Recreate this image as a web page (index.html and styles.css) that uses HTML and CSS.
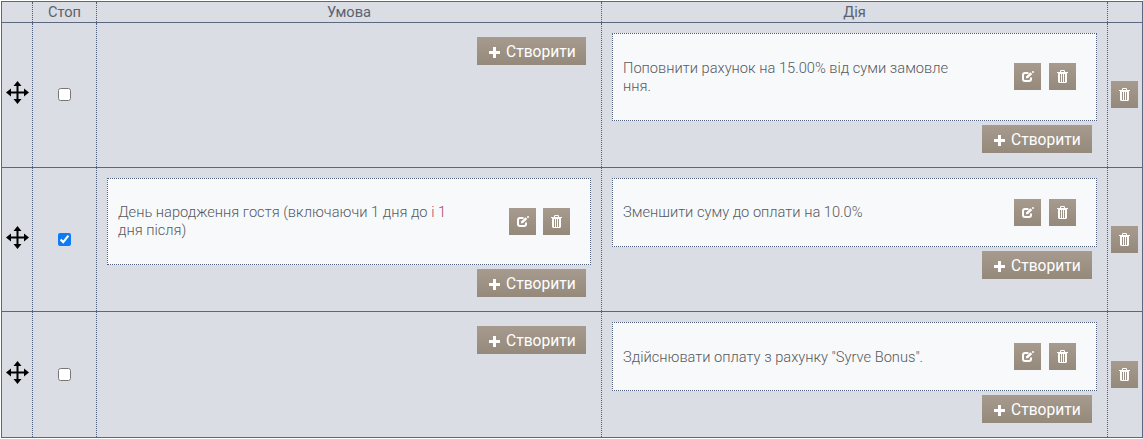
FILE: index.html
```html
<!DOCTYPE html>
<html lang="uk">
<head>
<meta charset="utf-8">
<title>Правила</title>
<link rel="stylesheet" href="styles.css">
</head>
<body>
<svg class="defs" width="0" height="0" aria-hidden="true">
  <symbol id="i-move" viewBox="0 0 23 23">
    <path d="M11.500 0 15.500 5H12.500V10.500H18V7.500L23 11.500 18 15.500V12.500H12.500V18H15.500L11.500 23 7.500 18H10.500V12.500H5V15.500L0 11.500 5 7.500V10.500H10.500V5H7.500Z"/>
  </symbol>
  <symbol id="i-edit" viewBox="0 0 12 11">
    <path d="M9 6.500V8A2 2 0 0 1 7 10H3A2 2 0 0 1 1 8V4A2 2 0 0 1 3 2H6.500" fill="none" stroke="currentColor" stroke-width="2"/>
    <path d="M3.800 7.600 4.300 5.200 8.500 1.300 10.300 3 6.200 7.100Z" fill="currentColor"/>
    <circle cx="11" cy="1" r="1" fill="currentColor"/>
  </symbol>
  <symbol id="i-trash" viewBox="0 0 11 13">
    <path d="M0 2H11V3H0ZM3 2V.8L3.800 0H7.200L8 .8V2H7V1H4V2Z" fill="currentColor"/>
    <path d="M1 3H10V12L9 13H2L1 12ZM3 4V12H4V4ZM5 4V12H6V4ZM7 4V12H8V4Z" fill="currentColor" fill-rule="evenodd"/>
  </symbol>
</svg>

<div class="rules">
  <div class="grid head">
    <div class="cell"></div>
    <div class="cell">Стоп</div>
    <div class="cell">Умова</div>
    <div class="cell">Дія</div>
    <div class="cell"></div>
  </div>

  <div class="grid row row-1">
    <div class="cell cell-move"><svg class="move"><use href="#i-move"/></svg></div>
    <div class="cell cell-stop"><input type="checkbox" aria-label="Стоп"></div>
    <div class="cell stack stack-empty">
      <button class="btn-create" type="button"><span class="plus"></span>Створити</button>
    </div>
    <div class="cell stack stack-action">
      <div class="card card-88">
        <p class="card-text">Поповнити рахунок на 15.00% від суми замовлення.</p>
        <div class="actions">
          <button class="btn-icon" type="button" aria-label="Редагувати"><svg class="ico-edit"><use href="#i-edit"/></svg></button>
          <button class="btn-icon" type="button" aria-label="Видалити"><svg class="ico-trash"><use href="#i-trash"/></svg></button>
        </div>
      </div>
      <button class="btn-create" type="button"><span class="plus"></span>Створити</button>
    </div>
    <div class="cell cell-del"><button class="btn-icon" type="button" aria-label="Видалити"><svg class="ico-trash"><use href="#i-trash"/></svg></button></div>
  </div>

  <div class="grid row row-2">
    <div class="cell cell-move"><svg class="move"><use href="#i-move"/></svg></div>
    <div class="cell cell-stop"><input type="checkbox" checked aria-label="Стоп"></div>
    <div class="cell stack stack-cond">
      <div class="card card-87">
        <p class="card-text">День народження гостя (включаючи 1 дня до <span class="accent">і 1</span> дня після)</p>
        <div class="actions">
          <button class="btn-icon" type="button" aria-label="Редагувати"><svg class="ico-edit"><use href="#i-edit"/></svg></button>
          <button class="btn-icon" type="button" aria-label="Видалити"><svg class="ico-trash"><use href="#i-trash"/></svg></button>
        </div>
      </div>
      <button class="btn-create" type="button"><span class="plus"></span>Створити</button>
    </div>
    <div class="cell stack stack-action">
      <div class="card card-69">
        <p class="card-text">Зменшити суму до оплати на 10.0%</p>
        <div class="actions">
          <button class="btn-icon" type="button" aria-label="Редагувати"><svg class="ico-edit"><use href="#i-edit"/></svg></button>
          <button class="btn-icon" type="button" aria-label="Видалити"><svg class="ico-trash"><use href="#i-trash"/></svg></button>
        </div>
      </div>
      <button class="btn-create" type="button"><span class="plus"></span>Створити</button>
    </div>
    <div class="cell cell-del"><button class="btn-icon" type="button" aria-label="Видалити"><svg class="ico-trash"><use href="#i-trash"/></svg></button></div>
  </div>

  <div class="grid row row-3">
    <div class="cell cell-move"><svg class="move"><use href="#i-move"/></svg></div>
    <div class="cell cell-stop"><input type="checkbox" aria-label="Стоп"></div>
    <div class="cell stack stack-empty">
      <button class="btn-create" type="button"><span class="plus"></span>Створити</button>
    </div>
    <div class="cell stack stack-action">
      <div class="card card-69">
        <p class="card-text">Здійснювати оплату з рахунку "Syrve Bonus".</p>
        <div class="actions">
          <button class="btn-icon" type="button" aria-label="Редагувати"><svg class="ico-edit"><use href="#i-edit"/></svg></button>
          <button class="btn-icon" type="button" aria-label="Видалити"><svg class="ico-trash"><use href="#i-trash"/></svg></button>
        </div>
      </div>
      <button class="btn-create" type="button"><span class="plus"></span>Створити</button>
    </div>
    <div class="cell cell-del"><button class="btn-icon" type="button" aria-label="Видалити"><svg class="ico-trash"><use href="#i-trash"/></svg></button></div>
  </div>
</div>
</body>
</html>
```

FILE: styles.css
```css
* { box-sizing: border-box; }
html, body { margin: 0; padding: 0; background: #fff; }
body { padding: 1px 0 0 1px; overflow: hidden; font-family: Roboto, "Liberation Sans", sans-serif; }
.defs { position: absolute; }

.rules {
  width: 1142px;
  background: #dadde4;
  border: 1px solid #5b6880;
}
.grid {
  display: grid;
  grid-template-columns: 30px 64px 505px 506px 35px;
  border-bottom: 1px solid #5b6880;
}
.grid:last-child { border-bottom: 0; }
.cell { border-left: 1px dotted #4f5f7c; min-width: 0; }
.cell:first-child { border-left: 0; }

.head { height: 21px; }
.head .cell {
  font-size: 14.67px;
  line-height: 20px;
  text-align: center;
  color: #5c626e;
}
.row-1 { height: 145px; }
.row-2 { height: 144px; }
.row-3 { height: 125px; }

.cell-move, .cell-stop, .cell-del {
  display: flex;
  align-items: center;
  justify-content: center;
}
.move { width: 23px; height: 23px; margin-bottom: 5px; margin-left: 1px; }
.cell-stop input { width: 13px; height: 13px; margin: 0; accent-color: #0d7bf5; }
.row-1 .cell-stop { padding-bottom: 2px; }
.cell-del { justify-content: flex-start; padding-left: 3px; }
.row-1 .cell-del { padding-bottom: 1px; }

.stack {
  display: flex;
  flex-direction: column;
  align-items: flex-end;
  gap: 4px;
  padding: 10px 10px 0;
}
.stack-empty { padding-top: 14px; }

.card {
  display: flex;
  align-items: center;
  width: 100%;
  padding: 0 20px 0 10px;
  background: #f8f9fb;
  border: 1px dotted #4f5f7c;
}
.card-88 { height: 88px; }
.card-87 { height: 87px; }
.card-69 { height: 69px; }
.card-text {
  flex: none;
  width: 330px;
  margin: -1px 0 0;
  font-size: 14.67px;
  font-weight: 300;
  line-height: 18px;
  color: #55595f;
  word-break: break-all;
}
.row-3 .card-text { margin-top: 1px; }
.accent { color: #a04a68; }
.actions { display: flex; gap: 8px; margin-left: auto; }
.row-1 .actions { margin-top: -1px; }
.stack-cond .actions { gap: 7px; }

.btn-icon, .btn-create {
  border: 0;
  padding: 0;
  color: #fff;
  background: linear-gradient(#a69b8e, #95897b);
  font-family: inherit;
}
.btn-icon {
  display: flex;
  align-items: center;
  justify-content: center;
  width: 27px;
  height: 27px;
}
.ico-edit { width: 12px; height: 11px; }
.ico-trash { width: 11px; height: 13px; }

.btn-create {
  display: flex;
  align-items: center;
  margin-right: 5px;
  width: 109px;
  height: 28px;
  padding: 2px 0 0 12px;
  font-size: 15.6px;
  line-height: 26px;
}
.stack-action .btn-create { width: 110px; }
.plus {
  width: 11px;
  height: 11px;
  margin-right: 6px;
  background:
    linear-gradient(#fff, #fff) center / 100% 3px no-repeat,
    linear-gradient(#fff, #fff) center / 3px 100% no-repeat;
}
```
